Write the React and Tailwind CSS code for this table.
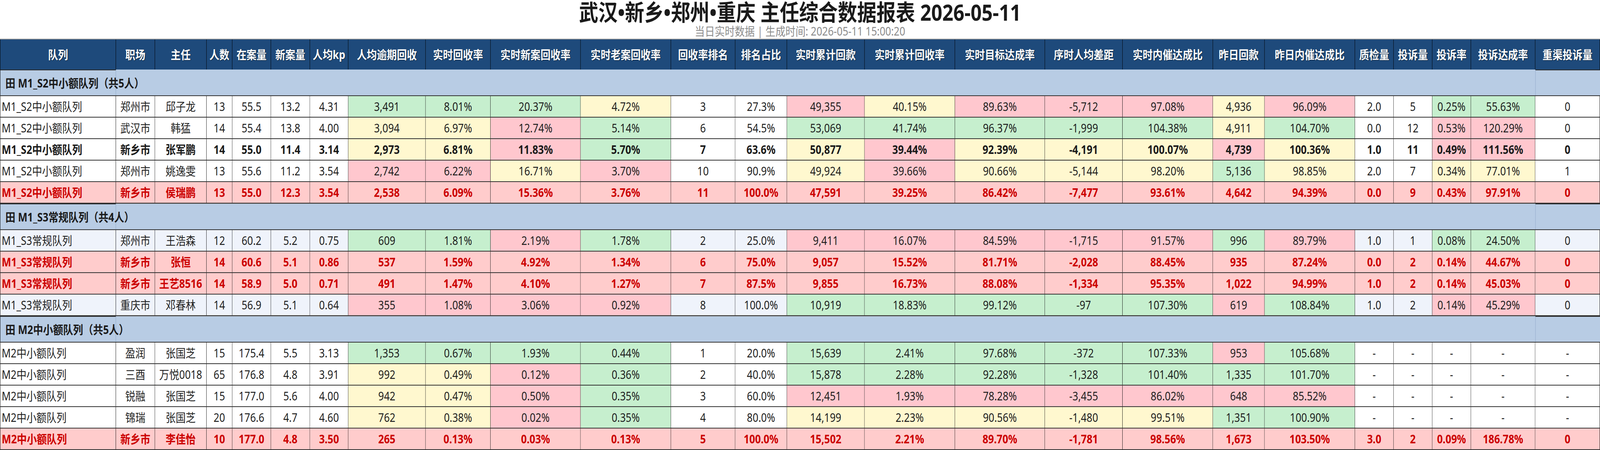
import React, { useLayoutEffect, useState } from "react";

const W = [
  "w-[348px]", "w-[117px]", "w-[155px]", "w-[77px]", "w-[116px]", "w-[117px]", "w-[115px]",
  "w-[232px]", "w-[195px]", "w-[270px]", "w-[271px]", "w-[193px]", "w-[155px]",
  "w-[233px]", "w-[271px]", "w-[270px]", "w-[233px]", "w-[271px]", "w-[155px]", "w-[271px]",
  "w-[116px]", "w-[116px]", "w-[116px]", "w-[193px]", "w-[194px]",
];

const HEAD = [
  "队列", "职场", "主任", "人数", "在案量", "新案量", "人均kp", "人均逾期回收", "实时回收率",
  "实时新案回收率", "实时老案回收率", "回收率排名", "排名占比", "实时累计回款", "实时累计回收率",
  "实时目标达成率", "序时人均差距", "实时内催达成比", "昨日回款", "昨日内催达成比", "质检量",
  "投诉量", "投诉率", "投诉达成率", "重渠投诉量",
];

const GROUPS = [
  {
    title: "田 M1_S2中小额队列（共5人）",
    rows: [
      { t: "n", c: ".......gggy..ryrrryr..gg.", v: ["M1_S2中小额队列", "郑州市", "邱子龙", "13", "55.5", "13.2", "4.31", "3,491", "8.01%", "20.37%", "4.72%", "3", "27.3%", "49,355", "40.15%", "89.63%", "-5,712", "97.08%", "4,936", "96.09%", "2.0", "5", "0.25%", "55.63%", "0"] },
      { t: "n", c: ".......yyrg..gggggyg..rr.", v: ["M1_S2中小额队列", "武汉市", "韩猛", "14", "55.4", "13.8", "4.00", "3,094", "6.97%", "12.74%", "5.14%", "6", "54.5%", "53,069", "41.74%", "96.37%", "-1,999", "104.38%", "4,911", "104.70%", "0.0", "12", "0.53%", "120.29%", "0"] },
      { t: "b", c: ".......yyrg..yryyyry..rr.", v: ["M1_S2中小额队列", "新乡市", "张军鹏", "14", "55.0", "11.4", "3.14", "2,973", "6.81%", "11.83%", "5.70%", "7", "63.6%", "50,877", "39.44%", "92.39%", "-4,191", "100.07%", "4,739", "100.36%", "1.0", "11", "0.49%", "111.56%", "0"] },
      { t: "n", c: ".......rryr..yryyygy..yy.", v: ["M1_S2中小额队列", "郑州市", "姚逸雯", "13", "55.6", "11.2", "3.54", "2,742", "6.22%", "16.71%", "3.70%", "10", "90.9%", "49,924", "39.66%", "90.66%", "-5,144", "98.20%", "5,136", "98.85%", "2.0", "7", "0.34%", "77.01%", "1"] },
      { t: "r", c: ".........................", v: ["M1_S2中小额队列", "新乡市", "侯瑞鹏", "13", "55.0", "12.3", "3.54", "2,538", "6.09%", "15.36%", "3.76%", "11", "100.0%", "47,591", "39.25%", "86.42%", "-7,477", "93.61%", "4,642", "94.39%", "0.0", "9", "0.43%", "97.91%", "0"] },
    ],
  },
  {
    title: "田 M1_S3常规队列（共4人）",
    rows: [
      { t: "l", c: ".......ggrg..rrrrrgr..gg.", v: ["M1_S3常规队列", "郑州市", "王浩森", "12", "60.2", "5.2", "0.75", "609", "1.81%", "2.19%", "1.78%", "2", "25.0%", "9,411", "16.07%", "84.59%", "-1,715", "91.57%", "996", "89.79%", "1.0", "1", "0.08%", "24.50%", "0"] },
      { t: "r", c: ".........................", v: ["M1_S3常规队列", "新乡市", "张恒", "14", "60.6", "5.1", "0.86", "537", "1.59%", "4.92%", "1.34%", "6", "75.0%", "9,057", "15.52%", "81.71%", "-2,028", "88.45%", "935", "87.24%", "0.0", "2", "0.14%", "44.67%", "0"] },
      { t: "r", c: ".........................", v: ["M1_S3常规队列", "新乡市", "王艺8516", "14", "58.9", "5.0", "0.71", "491", "1.47%", "4.10%", "1.27%", "7", "87.5%", "9,855", "16.73%", "88.08%", "-1,334", "95.35%", "1,022", "94.99%", "1.0", "2", "0.14%", "45.03%", "0"] },
      { t: "l", c: ".......rrrr..gggggrg..rr.", v: ["M1_S3常规队列", "重庆市", "邓春林", "14", "56.9", "5.1", "0.64", "355", "1.08%", "3.06%", "0.92%", "8", "100.0%", "10,919", "18.83%", "99.12%", "-97", "107.30%", "619", "108.84%", "1.0", "2", "0.14%", "45.29%", "0"] },
    ],
  },
  {
    title: "田 M2中小额队列（共5人）",
    rows: [
      { t: "n", c: ".......gggg..gggggrg.....", v: ["M2中小额队列", "盈润", "张国芝", "15", "175.4", "5.5", "3.13", "1,353", "0.67%", "1.93%", "0.44%", "1", "20.0%", "15,639", "2.41%", "97.68%", "-372", "107.33%", "953", "105.68%", "-", "-", "-", "-", "-"] },
      { t: "n", c: ".......yyrg..ggggggg.....", v: ["M2中小额队列", "三酉", "万悦0018", "65", "176.8", "4.8", "3.91", "992", "0.49%", "0.12%", "0.36%", "2", "40.0%", "15,878", "2.28%", "92.28%", "-1,328", "101.40%", "1,335", "101.70%", "-", "-", "-", "-", "-"] },
      { t: "n", c: ".......yyrg..rrrrrrr.....", v: ["M2中小额队列", "锐融", "张国芝", "15", "177.0", "5.6", "4.00", "942", "0.47%", "0.50%", "0.35%", "3", "60.0%", "12,451", "1.93%", "78.28%", "-3,455", "86.02%", "648", "85.52%", "-", "-", "-", "-", "-"] },
      { t: "n", c: ".......yyrg..yyyyygg.....", v: ["M2中小额队列", "锦瑞", "张国芝", "20", "176.6", "4.7", "4.60", "762", "0.38%", "0.02%", "0.35%", "4", "80.0%", "14,199", "2.23%", "90.56%", "-1,480", "99.51%", "1,351", "100.90%", "-", "-", "-", "-", "-"] },
      { t: "r", c: ".........................", v: ["M2中小额队列", "新乡市", "李佳怡", "10", "177.0", "4.8", "3.50", "265", "0.13%", "0.03%", "0.13%", "5", "100.0%", "15,502", "2.21%", "89.70%", "-1,781", "98.56%", "1,673", "103.50%", "3.0", "2", "0.09%", "186.78%", "0"] },
    ],
  },
];

function cellBg(row, i) {
  if (row.t === "r") return "bg-[#ffcccc]";
  const k = row.c[i];
  if (k === "g") return "bg-[#c6efce]";
  if (k === "y") return "bg-[#fff8cf]";
  if (k === "r") return "bg-[#ffc7ce]";
  if (row.t === "l") return "bg-[#eff3fb]";
  return "bg-white";
}

function textCls(row) {
  if (row.t === "r") return "font-bold text-[#cc0000]";
  if (row.t === "b") return "font-bold text-[#1a1a1a]";
  return "font-normal text-[#1f1f1f]";
}

function DataRow({ row }) {
  return (
    <div className="flex w-full h-[55px] border-b-2 border-[#333333]">
      {row.v.map((val, i) => (
        <div
          key={i}
          className={[
            W[i],
            "shrink-0 flex items-center whitespace-nowrap border-r border-black",
            i === 0 ? "justify-start pl-[4px] border-l" : "justify-center",
            cellBg(row, i),
            textCls(row),
          ].join(" ")}
        >
          {val}
        </div>
      ))}
    </div>
  );
}

function GroupRow({ title, first }) {
  return (
    <div className="flex w-full h-[68px] bg-[#b8cce4] border-b-2 border-[#333333]">
      <div className="relative z-10 w-[348px] shrink-0 flex items-center whitespace-nowrap border-l border-r border-r-[#8fa8c6] border-l-black border-t-2 border-t-[#2a2a2a] pl-[15px] font-bold text-[#1a1a1a]">
        {title}
      </div>
      <div className={first ? "flex-1" : "flex-1 border-t border-[#9a9a9a]"}></div>
      <div className="w-[194px] shrink-0 border-l border-l-[#8fa8c6] border-t-2 border-t-[#2a2a2a]"></div>
    </div>
  );
}

export default function App() {
  // The sheet is designed 4800px wide; fit it to the window width if the window is narrower.
  const [fit, setFit] = useState(1);
  useLayoutEffect(() => {
    const update = () => {
      const w = document.documentElement.clientWidth || window.innerWidth;
      setFit(Math.min(1, w / 4800));
    };
    update();
    window.addEventListener("resize", update);
    return () => window.removeEventListener("resize", update);
  }, []);

  return (
    <div className="w-full h-[1152px] overflow-hidden bg-white">
      <div
        className="w-[4800px] h-[1152px] origin-top-left bg-white [font-family:'Noto_Sans','Noto_Sans_CJK_SC',sans-serif] text-[30px]"
        style={{ transform: `scaleX(${fit})` }}
      >
        <div className="h-[62px] text-center text-[58px] leading-[62px] font-bold text-[#1a1a1a] whitespace-nowrap">
          武汉•新乡•郑州•重庆 主任综合数据报表 2026-05-11
        </div>
        <div className="h-[37px] text-center text-[30px] leading-[36px] text-[#8c8c8c] whitespace-nowrap">
          当日实时数据 | 生成时间: 2026-05-11 15:00:20
        </div>
        <div className="flex w-full h-[79px] border-t-2 border-[#9e9e9e] bg-[#1e4a7b]">
          {HEAD.map((h, i) => (
            <div
              key={i}
              className={[
                W[i],
                "shrink-0 flex items-center justify-center whitespace-nowrap border-r border-black font-bold text-white [text-shadow:1px_1px_2px_rgba(0,0,0,0.6)]",
                i === 0 ? "border-l" : "",
              ].join(" ")}
            >
              {h}
            </div>
          ))}
        </div>
        {GROUPS.map((g, gi) => (
          <React.Fragment key={gi}>
            <GroupRow title={g.title} first={gi === 0} />
            {g.rows.map((r, ri) => (
              <DataRow key={ri} row={r} />
            ))}
          </React.Fragment>
        ))}
      </div>
    </div>
  );
}
